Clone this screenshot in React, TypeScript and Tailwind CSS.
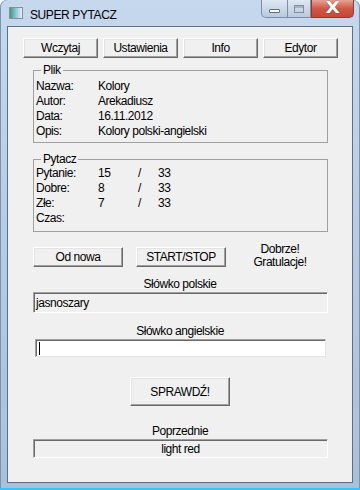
import type { ReactNode } from "react"

const font = "font-['Liberation_Sans',Arial,sans-serif] text-[12px] tracking-[-0.45px] text-black"

function Btn({ children, className }: { children: ReactNode; className: string }) {
    return (
        <button
            className={`flex items-center justify-center bg-[#f0f0f0] border border-t-white border-l-white border-r-[#696969] border-b-[#696969] shadow-[inset_-1px_-1px_0_#a0a0a0,inset_1px_1px_0_#e3e3e3] ${className}`}
        >
            {children}
        </button>
    )
}

function Row({ label, children }: { label: string; children?: ReactNode }) {
    return (
        <div className="flex leading-[15px]">
            <span className="w-[62px]">{label}</span>
            {children}
        </div>
    )
}

function Score({ label, value }: { label: string; value?: string }) {
    return (
        <Row label={label}>
            {value && (
                <>
                    <span className="w-[40px]">{value}</span>
                    <span className="w-[20px]">/</span>
                    <span>33</span>
                </>
            )}
        </Row>
    )
}

export default function App() {
    return (
        <div className={`w-[360px] h-[490px] flex flex-col px-[7px] pb-[7px] rounded-t-[7px] bg-gradient-to-b from-[#c6d8ee] via-[#b6cbe4] to-[#a9c0db] shadow-[inset_0_-2px_0_#3cc3ef,inset_1px_0_0_#7c93b0,inset_-1px_0_0_#7c93b0] ${font}`}>
            {/* title bar */}
            <div className="h-[26px] flex items-start">
                <div className="mt-[7px] ml-[2px] w-[14px] h-[12px] border border-[#8a8f96] bg-gradient-to-r from-[#3f9a7a] via-[#8cc6e0] to-[#e8eef2]" />
                <span className="mt-[6px] ml-[7px] text-[12px] tracking-[-0.4px]">SUPER PYTACZ</span>
                <div className="ml-auto mr-[-1px] flex h-[18px]">
                    <div className="w-[27px] flex items-center justify-center rounded-bl-[5px] border border-t-0 border-[#7d8ea4] bg-gradient-to-b from-[#dfe8f3] to-[#b9c9dc]">
                        <div className="mt-[4px] w-[11px] h-[4px] rounded-[1px] border border-[#5c6b80] bg-white" />
                    </div>
                    <div className="w-[23px] flex items-center justify-center border-t-0 border-y border-r border-[#7d8ea4] bg-gradient-to-b from-[#dfe8f3] to-[#b9c9dc]">
                        <div className="w-[10px] h-[8px] border border-[#7f8da0] shadow-[inset_0_2px_0_#a9b5c4]" />
                    </div>
                    <div className="w-[43px] flex items-center justify-center rounded-br-[5px] border border-t-0 border-[#8e3a30] bg-gradient-to-b from-[#e5a393] via-[#cf5745] to-[#c44a36]">
                        <span className="text-white font-bold text-[15px] leading-none font-['DejaVu_Sans',sans-serif] scale-x-125 [text-shadow:0_0_1px_#6b1f16]">X</span>
                    </div>
                </div>
            </div>

            {/* client area */}
            <div className="flex-1 flex flex-col border border-[#5a6f88] bg-[#f0f0f0]">
                <div className="mt-[11px] ml-[15px] flex gap-[5px]">
                    <Btn className="w-[75px] h-[20px]">Wczytaj</Btn>
                    <Btn className="w-[75px] h-[20px]">Ustawienia</Btn>
                    <Btn className="w-[75px] h-[20px]">Info</Btn>
                    <Btn className="w-[75px] h-[20px]">Edytor</Btn>
                </div>

                <fieldset className="mt-[5px] ml-[25px] w-[295px] border border-[#a0a0a0] px-[2px] pb-[3px] pt-[2px]">
                    <legend className="ml-[5px] px-[2px] leading-[14px]">Plik</legend>
                    <Row label="Nazwa:">Kolory</Row>
                    <Row label="Autor:">Arekadiusz</Row>
                    <Row label="Data:">16.11.2012</Row>
                    <Row label="Opis:">Kolory polski-angielski</Row>
                </fieldset>

                <fieldset className="mt-[9px] ml-[25px] w-[295px] border border-[#a0a0a0] px-[2px] pb-[5px]">
                    <legend className="ml-[5px] px-[2px] leading-[14px]">Pytacz</legend>
                    <Score label="Pytanie:" value="15" />
                    <Score label="Dobre:" value="8" />
                    <Score label="Złe:" value="7" />
                    <Score label="Czas:" />
                </fieldset>

                <div className="mt-[10px] ml-[25px] flex items-start">
                    <Btn className="mt-[5px] w-[90px] h-[20px]">Od nowa</Btn>
                    <Btn className="mt-[5px] ml-[13px] w-[90px] h-[20px]">START/STOP</Btn>
                    <div className="mt-[1px] w-[108px] text-center leading-[13px]">
                        Dobrze!
                        <br />
                        Gratulacje!
                    </div>
                </div>

                <div className="mt-[8px] text-center leading-[15px]">Słówko polskie</div>
                <div className="ml-[25px] w-[295px] h-[21px] flex items-center px-[2px] border border-t-[#a0a0a0] border-l-[#a0a0a0] border-r-white border-b-white shadow-[inset_1px_1px_0_#696969]">
                    jasnoszary
                </div>

                <div className="mt-[11px] text-center leading-[15px]">Słówko angielskie</div>
                <div className="ml-[27px] w-[291px] h-[18px] flex items-center px-[3px] bg-white border border-t-[#a0a0a0] border-l-[#a0a0a0] border-r-[#e3e3e3] border-b-[#e3e3e3] shadow-[inset_1px_1px_0_#696969]">
                    <div className="w-[1px] h-[13px] bg-black" />
                </div>

                <Btn className="mt-[20px] mx-auto w-[100px] h-[29px]">SPRAWDŹ!</Btn>

                <div className="mt-[18px] text-center leading-[15px]">Poprzednie</div>
                <div className="ml-[25px] w-[295px] h-[19px] flex items-center justify-center border border-t-[#a0a0a0] border-l-[#a0a0a0] border-r-white border-b-white shadow-[inset_1px_1px_0_#696969]">
                    light red
                </div>
            </div>
        </div>
    )
}
